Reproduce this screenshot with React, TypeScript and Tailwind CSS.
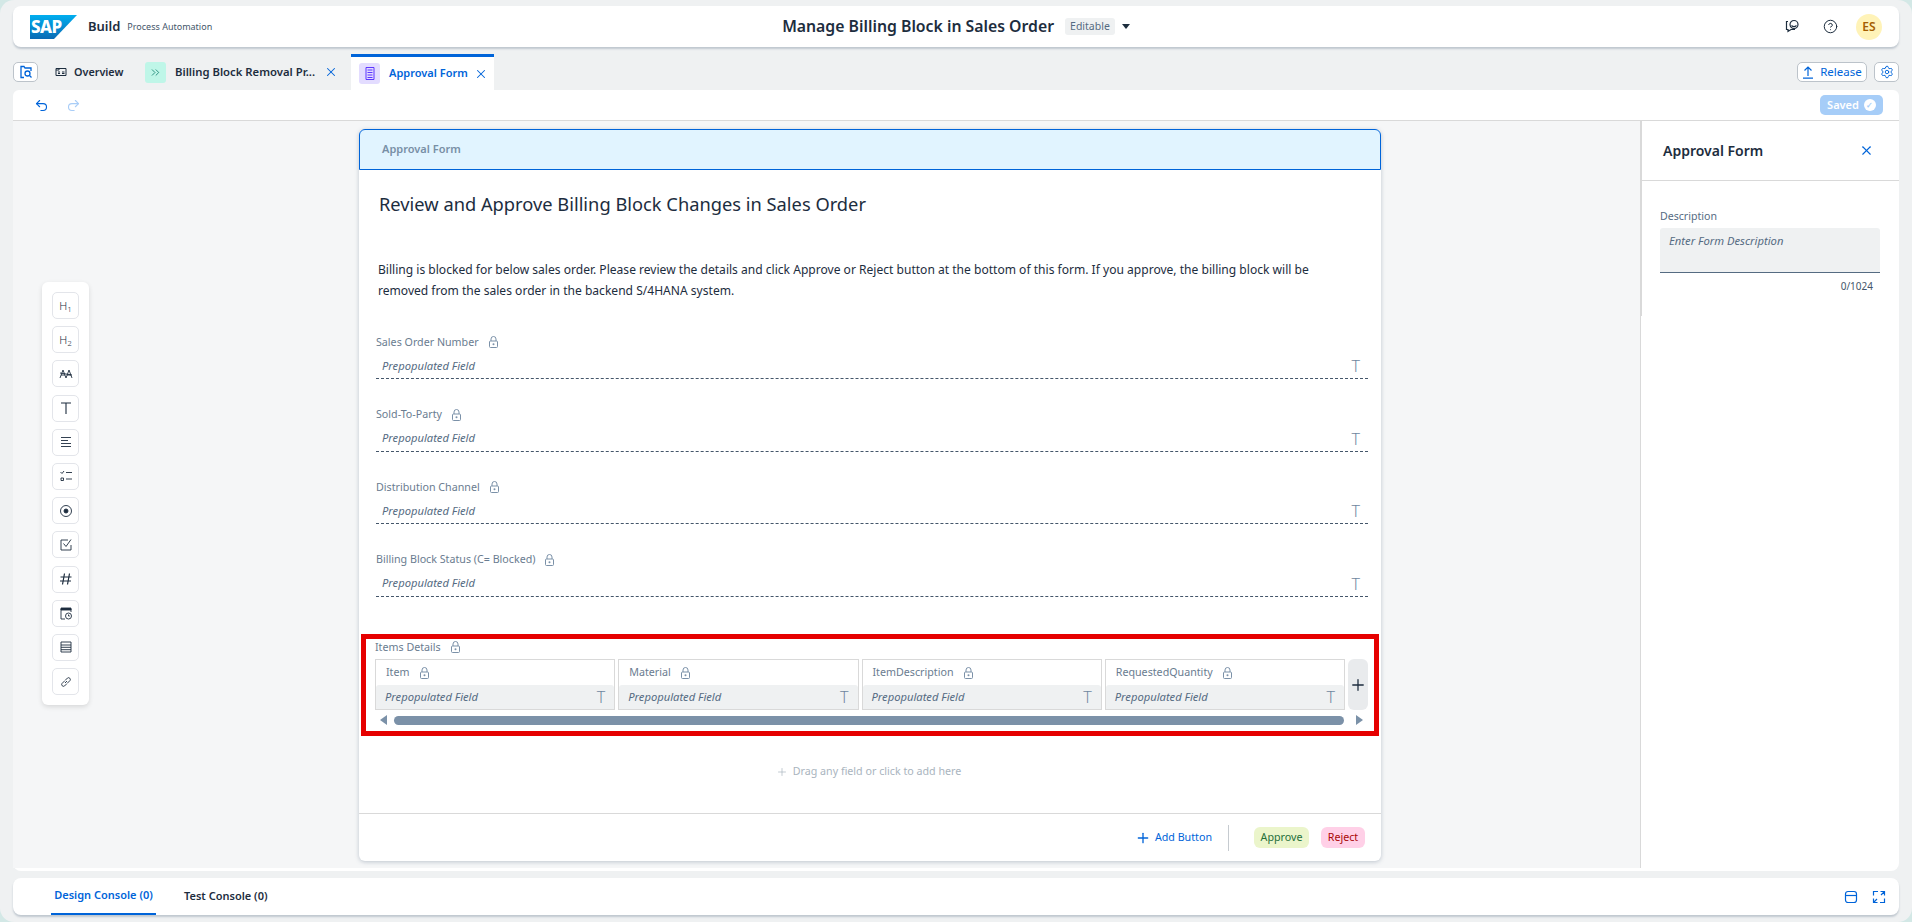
import { ChevronsRight, CircleHelp, Plus, Redo2, Settings, Undo2, X } from "lucide-react";
import type { ReactNode } from "react";

const FONT = "font-['Noto_Sans','Open_Sans',sans-serif]";

function Tool({ children }: { children: ReactNode }) {
  return (
    <div className="flex h-[27px] w-[27px] items-center justify-center rounded-[5px] border border-[#e3e5ea] bg-white text-[#1d2d3e]">
      {children}
    </div>
  );
}

function Svg({ children }: { children: ReactNode }) {
  return (
    <svg width="14" height="14" viewBox="0 0 14 14" fill="none" stroke="currentColor" strokeWidth="0.9">
      {children}
    </svg>
  );
}

function LockIcon() {
  return (
    <svg width="9" height="12" viewBox="0 0 9 12" fill="none" stroke="#7b91a8" strokeWidth="1" className="shrink-0">
      <path d="M2 5V3a2.5 2.5 0 0 1 5 0v2" />
      <rect x="0.5" y="5" width="8" height="6.5" rx="1" />
      <circle cx="4.5" cy="8.2" r="1" fill="#7b91a8" stroke="none" />
    </svg>
  );
}

function Heading({ n }: { n: number }) {
  return (
    <span className="flex items-end font-light leading-none">
      <span className="text-[11px] leading-none">H</span>
      <span className="mb-[-2px] text-[8px] leading-none">{n}</span>
    </span>
  );
}

function Palette() {
  return (
    <div className="flex w-[47px] flex-col items-center gap-[7.2px] rounded-[6px] bg-white py-[10px] shadow-[0_2px_5px_rgba(0,0,0,0.12)]">
      <Tool>
        <Heading n={1} />
      </Tool>
      <Tool>
        <Heading n={2} />
      </Tool>
      <Tool>
        <Svg>
          <path d="M1 11 4 3l3 8M2 8h4M7 11l3-8 3 8M8 8h4M1 6l12 2" />
        </Svg>
      </Tool>
      <Tool>
        <Svg>
          <path d="M2 2h10M7 2v11" strokeWidth="1.1" />
        </Svg>
      </Tool>
      <Tool>
        <Svg>
          <path d="M2 2.5h10M2 5.5h7M2 8.5h10M2 11.5h10" />
        </Svg>
      </Tool>
      <Tool>
        <Svg>
          <path d="M1.5 3 3 4.5 5 2M7 3.5h6M7 10h6M2 9h2.5v2.5H2z" />
        </Svg>
      </Tool>
      <Tool>
        <Svg>
          <circle cx="7" cy="7" r="5.5" />
          <circle cx="7" cy="7" r="2" fill="currentColor" />
        </Svg>
      </Tool>
      <Tool>
        <Svg>
          <path d="M9 2H2v10h10V7M4.5 5.5 7 8.5l5-7" />
        </Svg>
      </Tool>
      <Tool>
        <Svg>
          <path d="M5.5 1.5 3.5 12.5M10.5 1.5l-2 11M1.5 5h11M1 9h11" strokeWidth="1.2" />
        </Svg>
      </Tool>
      <Tool>
        <Svg>
          <path d="M2 3h10v3M2 3v10h4" />
          <path d="M2 2h10v2H2z" fill="currentColor" />
          <circle cx="9.5" cy="10" r="3" />
          <path d="M9.5 8.5V10h1.3" />
        </Svg>
      </Tool>
      <Tool>
        <Svg>
          <path d="M2 2h10v10H2zM2 5h10M2 7.3h10M2 9.7h10" />
        </Svg>
      </Tool>
      <Tool>
        <Svg>
          <path d="M6 8 8 6M5.5 6 3 8.5a1.8 1.8 0 0 0 2.5 2.5L8 8.5M6 5.5 8.5 3a1.8 1.8 0 0 1 2.5 2.5L8.5 8" />
        </Svg>
      </Tool>
    </div>
  );
}

function Field({ label }: { label: string }) {
  return (
    <div className="h-[72.5px]">
      <div className="flex h-[20px] items-center gap-[10px] text-[10.7px] text-[#6a7c90]">
        {label}
        <LockIcon />
      </div>
      <div className="mt-[2px] flex h-[25px] items-center justify-between border-b border-dashed border-[#44566a] pl-[6px] pr-[8px] text-[11.2px] italic text-[#556b82]">
        Prepopulated Field
        <span className="text-[16px] font-light not-italic leading-none text-[#6f87a0]">T</span>
      </div>
    </div>
  );
}

function Column({ label }: { label: string }) {
  return (
    <div className="flex h-[51px] flex-1 flex-col border border-[#d9d9d9]">
      <div className="flex h-[25px] items-center gap-[10px] pl-[10px] text-[10.7px] text-[#6a7c90]">
        {label}
        <LockIcon />
      </div>
      <div className="flex flex-1 items-center justify-between rounded-t-[3px] bg-[#eff1f2] pl-[9px] pr-[9px] text-[11.2px] italic text-[#556b82]">
        Prepopulated Field
        <span className="text-[16px] font-light not-italic leading-none text-[#6f87a0]">T</span>
      </div>
    </div>
  );
}

export default function App() {
  return (
    <div className={`${FONT} h-[922px] w-[1912px] overflow-hidden bg-[#d3e8e6] text-[#1d2d3e]`}>
      <div className="flex h-full flex-col rounded-[14px] bg-[#eff1f2] px-[13px] pb-[7px] pt-[6px]">
        <header className="grid h-[41px] shrink-0 grid-cols-[1fr_auto_1fr] items-center rounded-[8px] bg-white pl-[17px] pr-[17px] shadow-[0_2px_2px_rgba(85,107,130,0.3)]">
          <div className="flex items-center">
            <svg width="47" height="24" viewBox="0 0 47 24">
              <defs>
                <linearGradient id="sap" x1="0" y1="0" x2="0" y2="1">
                  <stop offset="0" stopColor="#00aeef" />
                  <stop offset="1" stopColor="#0a6ab4" />
                </linearGradient>
              </defs>
              <polygon points="0,0 47,0 24,24 0,24" fill="url(#sap)" />
            </svg>
            <span className="-ml-[47px] w-[36px] pl-px text-[17px] font-extrabold leading-none tracking-[-0.5px] text-white">SAP</span>
            <span className="ml-[22px] text-[13px] font-semibold">Build</span>
            <span className="ml-[7px] text-[9px] text-[#44566a]">Process Automation</span>
          </div>
          <div className="flex items-center">
            <span className="text-[15.8px] font-semibold">Manage Billing Block in Sales Order</span>
            <span className="ml-[11px] rounded-[3px] bg-[#eff1f2] px-[5px] py-px text-[10.5px] text-[#556b82]">Editable</span>
            <span className="ml-[7px] h-0 w-0 border-x-[4px] border-t-[5px] border-x-transparent border-t-[#1d2d3e]" />
          </div>
          <div className="flex items-center justify-end text-[#1d2d3e]">
            <svg width="15" height="15" viewBox="0 0 15 15" fill="none" stroke="currentColor" strokeWidth="1.2">
              <circle cx="9" cy="5.5" r="4" />
              <path d="M6.5 6.5c1.5 1.3 3.5 1.3 5 0M3 2.5H1.5v8H3v2l3-2h4" />
            </svg>
            <CircleHelp size={15} strokeWidth={1.6} className="ml-[23px]" />
            <div className="ml-[18px] flex h-[26px] w-[26px] items-center justify-center rounded-full bg-[#fff3b8] text-[12px] font-semibold text-[#a45d00]">
              ES
            </div>
          </div>
        </header>

        <div className="flex h-[43px] shrink-0 items-end justify-between">
          <div className="flex h-[36px] items-center">
            <div className="flex h-[20px] w-[25px] items-center justify-center rounded-[5px] border border-[#bcc3ca] bg-white text-[#0064d9]">
              <svg width="14" height="14" viewBox="0 0 14 14" fill="none" stroke="currentColor" strokeWidth="1.3">
                <path d="M5 12.5H2V1.5h3l1 1.5h6v3" />
                <circle cx="8.5" cy="8.5" r="2.5" />
                <path d="m10.5 10.5 2 2" />
              </svg>
            </div>
            <svg width="12" height="12" viewBox="0 0 12 12" fill="none" stroke="#1d2d3e" strokeWidth="1" className="ml-[17px]">
              <path d="M1 2.5h10v7H1zM1 4h3V2.5M3 6h2M3 7.5h2M7 6h2.5M7 7.5h2.5" />
            </svg>
            <span className="ml-[7px] w-[50px] text-[10.8px] font-semibold">Overview</span>
            <div className="ml-[21px] flex h-[21px] w-[21px] items-center justify-center rounded-[3px] bg-[#bff6e8] text-[#107e6c]">
              <ChevronsRight size={13} strokeWidth={1.5} />
            </div>
            <span className="ml-[9px] w-[140px] whitespace-nowrap text-[11.3px] font-semibold">Billing Block Removal Pr...</span>
            <X size={14} strokeWidth={1.8} className="ml-[9px] text-[#0064d9]" />
            <div className="ml-[13px] flex h-[36px] w-[143px] items-center border-t-[3px] border-[#0064d9] bg-white pl-[8px] text-[#0064d9]">
              <div className="flex h-[21px] w-[21px] items-center justify-center rounded-[3px] bg-[#e3dcff] text-[#5d36ff]">
                <svg width="10" height="13" viewBox="0 0 10 13" fill="none" stroke="currentColor" strokeWidth="1">
                  <path d="M1 .5h8v12H1zM2.5 3h5M2.5 5.5h5M2.5 8h5M2.5 10.5h5" />
                </svg>
              </div>
              <span className="ml-[9px] w-[85px] whitespace-nowrap text-[11px] font-semibold">Approval Form</span>
              <X size={14} strokeWidth={1.8} />
            </div>
          </div>
          <div className="mb-[8px] flex items-center gap-[7px]">
            <div className="flex h-[20px] w-[70px] items-center justify-center gap-[6px] rounded-[5px] border border-[#bcc3ca] bg-white text-[11.5px] text-[#0064d9]">
              <svg width="12" height="13" viewBox="0 0 12 13" fill="none" stroke="currentColor" strokeWidth="1.2">
                <path d="M6 10V1M2.5 4.5 6 1l3.5 3.5M1 12.2h10" />
              </svg>
              Release
            </div>
            <div className="flex h-[20px] w-[25px] items-center justify-center rounded-[5px] border border-[#bcc3ca] bg-white text-[#0064d9]">
              <Settings size={14} strokeWidth={1.6} />
            </div>
          </div>
        </div>

        <div className="flex h-[31px] shrink-0 items-center justify-between rounded-t-[6px] border-b border-[#d9d9d9] bg-white pl-[21px] pr-[16px]">
          <div className="flex items-center gap-[17px]">
            <Undo2 size={15} strokeWidth={1.8} className="text-[#0064d9]" />
            <Redo2 size={15} strokeWidth={1.8} className="text-[#a9cdf7]" />
          </div>
          <div className="flex h-[20px] w-[63px] items-center justify-center gap-[5px] rounded-[5px] bg-[#a6cdf8] text-[11px] font-semibold text-white">
            Saved
            <span className="flex h-[12px] w-[12px] items-center justify-center rounded-full bg-white text-[8px] leading-none text-[#a6cdf8]">✓</span>
          </div>
        </div>

        <main className="flex min-h-0 flex-1 rounded-b-[8px] bg-white">
          <div className="flex h-[747px] flex-1 bg-[#f5f6f7]">
            <div className="ml-[29px] mt-[161px] self-start">
              <Palette />
            </div>
            <div className="ml-[270px] mt-[8px] flex h-[732px] w-[1022px] flex-col rounded-[6px] bg-white shadow-[0_1px_4px_rgba(85,107,130,0.35)]">
              <div className="flex h-[41px] shrink-0 items-center rounded-t-[6px] border border-[#0064d9] bg-[#e1f4ff] pl-[22px] text-[11px] font-semibold text-[#788fa6]">
                Approval Form
              </div>
              <div className="pl-[20px] pr-[13px]">
                <h1 className="mt-[19px] text-[18.3px] font-normal leading-[30px]">Review and Approve Billing Block Changes in Sales Order</h1>
                <p className="-ml-px mt-[41px] text-[12.07px] leading-[20.5px]">
                  Billing is blocked for below sales order. Please review the details and click Approve or Reject button at the bottom of this form. If you approve, the billing block will be
                  <br />
                  removed from the sales order in the backend S/4HANA system.
                </p>
                <div className="-ml-[3px] mt-[31px]">
                  <Field label="Sales Order Number" />
                  <Field label="Sold-To-Party" />
                  <Field label="Distribution Channel" />
                  <Field label="Billing Block Status (C= Blocked)" />
                </div>
              </div>
              <div className="mx-[2px] mt-[12px] h-[102px] border-[5px] border-[#e60000] pl-[9px] pr-[6px]">
                <div className="flex h-[20px] items-center gap-[10px] pb-[4px] text-[10.7px] text-[#6a7c90]">
                  Items Details
                  <LockIcon />
                </div>
                <div className="flex gap-[3px]">
                  <Column label="Item" />
                  <Column label="Material" />
                  <Column label="ItemDescription" />
                  <Column label="RequestedQuantity" />
                  <div className="flex h-[51px] w-[20px] shrink-0 items-center justify-center rounded-[6px] bg-[#e9ebed]">
                    <Plus size={18} strokeWidth={1.7} />
                  </div>
                </div>
                <div className="mt-[5px] flex h-[10px] items-center gap-[7px]">
                  <span className="ml-[5px] h-0 w-0 border-y-[5px] border-r-[7px] border-y-transparent border-r-[#7b91a8]" />
                  <div className="h-[9px] w-[950px] rounded-full bg-[#7b91a8]" />
                  <span className="ml-[5px] h-0 w-0 border-y-[5px] border-l-[7px] border-y-transparent border-l-[#7b91a8]" />
                </div>
              </div>
              <div className="flex flex-1 items-center justify-center gap-[5px] pb-[6px] pr-[3px] text-[10.7px] text-[#a9b4be]">
                <Plus size={12} strokeWidth={1.4} />
                Drag any field or click to add here
              </div>
              <div className="flex h-[48px] shrink-0 items-center justify-end border-t border-[#d9d9d9] pr-[16px] text-[10.7px]">
                <Plus size={16} strokeWidth={2} className="text-[#0064d9]" />
                <span className="ml-[4px] text-[#0064d9]">Add Button</span>
                <span className="ml-[16px] h-[26px] w-px bg-[#c6cbd0]" />
                <span className="ml-[25px] flex h-[21px] w-[55px] items-center justify-center rounded-[6px] bg-[#ebf5cb] text-[#256f3a]">Approve</span>
                <span className="ml-[12px] flex h-[21px] w-[44px] items-center justify-center rounded-[6px] bg-[#ffd0e7] text-[#aa0808]">Reject</span>
              </div>
            </div>
          </div>
          <aside className="h-[747px] w-[259px] shrink-0 border-l border-[#d9d9d9]">
            <div className="-ml-px h-[195px] border-l-[2px] border-[#d9d9d9]">
              <div className="flex h-[60px] items-center justify-between border-b border-[#d9d9d9] pl-[21px] pr-[25px]">
                <span className="text-[14px] font-semibold">Approval Form</span>
                <X size={15} strokeWidth={1.7} className="text-[#0064d9]" />
              </div>
              <div className="pl-[18px] pr-[19px] pt-[27px]">
                <div className="h-[16px] text-[10.6px] leading-[16px] text-[#556b82]">Description</div>
                <div className="mt-[4px] h-[45px] rounded-t-[3px] border-b border-[#556b82] bg-[#eff1f2] px-[9px] pt-[5px] text-[11.25px] italic text-[#556b82]">
                  Enter Form Description
                </div>
                <div className="mt-[6px] pr-[7px] text-right text-[10px] leading-[14px] text-[#44566a]">0/1024</div>
              </div>
            </div>
          </aside>
        </main>

        <footer className="mt-[7px] flex h-[37px] shrink-0 items-center justify-between rounded-[8px] bg-white pl-[38px] pr-[13px] shadow-[0_2px_2px_rgba(85,107,130,0.3)]">
          <div className="flex h-full items-center text-[11px] font-semibold">
            <span className="flex h-full w-[105px] items-center justify-center border-b-[2px] border-[#0064d9] text-[#0064d9]">Design Console (0)</span>
            <span className="ml-[28px]">Test Console (0)</span>
          </div>
          <div className="flex items-center gap-[14px] text-[#0064d9]">
            <svg width="14" height="14" viewBox="0 0 14 14" fill="none" stroke="currentColor" strokeWidth="1.2">
              <rect x="1.5" y="1.5" width="11" height="11" rx="2.5" />
              <path d="M1.5 5.5h11" />
            </svg>
            <svg width="14" height="14" viewBox="0 0 14 14" fill="none" stroke="currentColor" strokeWidth="1.2">
              <path d="M1.5 5.5v-4H6M8.5 1.5h4v4M12.5 8.5v4H8M5.5 12.5h-4v-4M9 5l3.5-3.5M5 9l-3.5 3.5" />
            </svg>
          </div>
        </footer>
      </div>
    </div>
  );
}
